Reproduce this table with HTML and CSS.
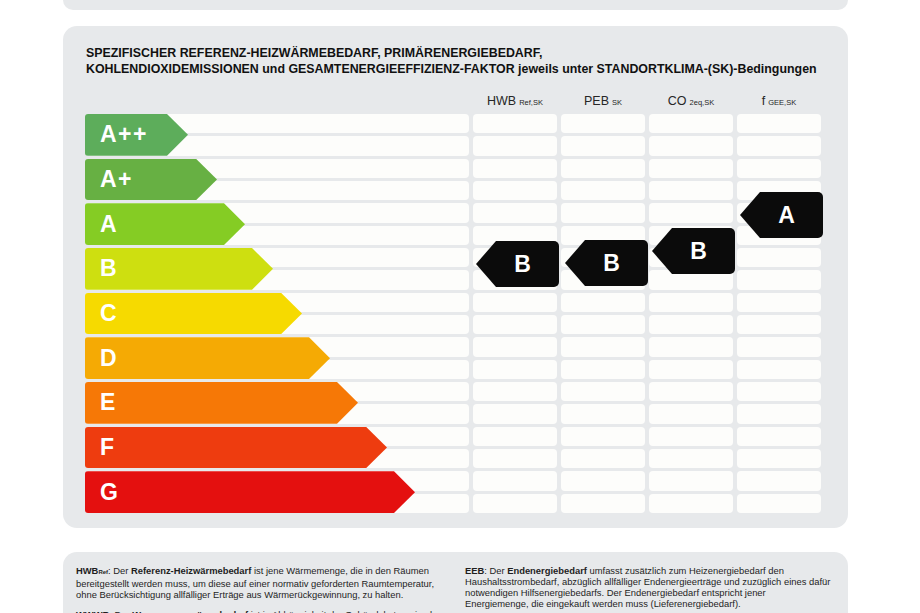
FILE: index.html
```html
<!DOCTYPE html>
<html lang="de">
<head>
<meta charset="utf-8">
<title>Energieausweis – Skala</title>
<link rel="stylesheet" href="styles.css">
</head>
<body>
<div class="page">
  <div class="card card-top"></div>

  <section class="card card-main">
    <h1 class="title">SPEZIFISCHER REFERENZ-HEIZWÄRMEBEDARF, PRIMÄRENERGIEBEDARF,<br>KOHLENDIOXIDEMISSIONEN und GESAMTENERGIEEFFIZIENZ-FAKTOR jeweils unter STANDORTKLIMA-(SK)-Bedingungen</h1>

    <div class="chart">
      <div class="head"></div>
      <div class="head">HWB<span class="sub">Ref,SK</span></div>
      <div class="head">PEB<span class="sub">SK</span></div>
      <div class="head">CO<span class="sub">2eq,SK</span></div>
      <div class="head">f<span class="sub">GEE,SK</span></div>

      <div class="scale">
        <div class="band"><div class="s s1"></div><div class="s s2"></div><div class="bar r-app">A++</div></div>
        <div class="band"><div class="s s1"></div><div class="s s2"></div><div class="bar r-ap">A+</div></div>
        <div class="band"><div class="s s1"></div><div class="s s2"></div><div class="bar r-a">A</div></div>
        <div class="band"><div class="s s1"></div><div class="s s2"></div><div class="bar r-b">B</div></div>
        <div class="band"><div class="s s1"></div><div class="s s2"></div><div class="bar r-c">C</div></div>
        <div class="band"><div class="s s1"></div><div class="s s2"></div><div class="bar r-d">D</div></div>
        <div class="band"><div class="s s1"></div><div class="s s2"></div><div class="bar r-e">E</div></div>
        <div class="band"><div class="s s1"></div><div class="s s2"></div><div class="bar r-f">F</div></div>
        <div class="band"><div class="s s1"></div><div class="s s2"></div><div class="bar r-g">G</div></div>
      </div>

      <div class="col">
        <div class="s"></div><div class="s"></div><div class="s"></div><div class="s"></div><div class="s"></div><div class="s"></div>
        <div class="s"></div><div class="s"></div><div class="s"></div><div class="s"></div><div class="s"></div><div class="s"></div>
        <div class="s"></div><div class="s"></div><div class="s"></div><div class="s"></div><div class="s"></div><div class="s"></div>
        <div class="mark m-hwb">B</div>
      </div>
      <div class="col">
        <div class="s"></div><div class="s"></div><div class="s"></div><div class="s"></div><div class="s"></div><div class="s"></div>
        <div class="s"></div><div class="s"></div><div class="s"></div><div class="s"></div><div class="s"></div><div class="s"></div>
        <div class="s"></div><div class="s"></div><div class="s"></div><div class="s"></div><div class="s"></div><div class="s"></div>
        <div class="mark m-peb">B</div>
      </div>
      <div class="col">
        <div class="s"></div><div class="s"></div><div class="s"></div><div class="s"></div><div class="s"></div><div class="s"></div>
        <div class="s"></div><div class="s"></div><div class="s"></div><div class="s"></div><div class="s"></div><div class="s"></div>
        <div class="s"></div><div class="s"></div><div class="s"></div><div class="s"></div><div class="s"></div><div class="s"></div>
        <div class="mark m-co">B</div>
      </div>
      <div class="col">
        <div class="s"></div><div class="s"></div><div class="s"></div><div class="s"></div><div class="s"></div><div class="s"></div>
        <div class="s"></div><div class="s"></div><div class="s"></div><div class="s"></div><div class="s"></div><div class="s"></div>
        <div class="s"></div><div class="s"></div><div class="s"></div><div class="s"></div><div class="s"></div><div class="s"></div>
        <div class="mark m-f">A</div>
      </div>
    </div>
  </section>

  <section class="card card-notes">
    <div class="notes-col">
      <p><b>HWB<span class="nsub">Ref</span></b>: Der <b>Referenz-Heizwärmebedarf</b> ist jene Wärmemenge, die in den Räumen<br>bereitgestellt werden muss, um diese auf einer normativ geforderten Raumtemperatur,<br>ohne Berücksichtigung allfälliger Erträge aus Wärmerückgewinnung, zu halten.</p>
      <p><b>WWWB</b>: Der <b>Warmwasserwärmebedarf</b> ist in Abhängigkeit der Gebäudekategorie als</p>
    </div>
    <div class="notes-col">
      <p><b>EEB</b>: Der <b>Endenergiebedarf</b> umfasst zusätzlich zum Heizenergiebedarf den<br>Haushaltsstrombedarf, abzüglich allfälliger Endenergieerträge und zuzüglich eines dafür<br>notwendigen Hilfsenergiebedarfs. Der Endenergiebedarf entspricht jener<br>Energiemenge, die eingekauft werden muss (Lieferenergiebedarf).</p>
    </div>
  </section>
</div>
</body>
</html>
```

FILE: styles.css
```css
html, body {
  margin: 0;
  padding: 0;
  background: #ffffff;
}

body {
  font-family: "Liberation Sans", Arial, sans-serif;
  color: #1c1c1c;
  width: 920px;
  height: 613px;
  overflow: hidden;
}

.page {
  display: flex;
  flex-direction: column;
  gap: 16px;
  margin-left: 63px;
  width: 785px;
}

.card {
  background: #e7e9eb;
  border-radius: 14px;
}

.card-top {
  height: 10px;
  border-radius: 0 0 12px 12px;
}

.card-main {
  padding: 19px 26px 15px 22px;
}

.title {
  margin: 0 0 16px 1px;
  font-size: 12.4px;
  line-height: 16px;
  font-weight: bold;
  color: #111111;
  white-space: nowrap;
}

.chart {
  display: grid;
  grid-template-columns: 384px repeat(4, 84px);
  column-gap: 4px;
}

.head {
  height: 16px;
  margin-bottom: 5px;
  text-align: center;
  font-size: 12.5px;
  line-height: 16px;
  color: #262626;
  white-space: nowrap;
}

.sub {
  font-size: 7.5px;
  margin-left: 3px;
}

.scale,
.col {
  display: grid;
  height: 399px;
  row-gap: 3px;
}

.scale {
  grid-template-rows: repeat(9, 1fr);
}

.col {
  grid-template-rows: repeat(18, 1fr);
  position: relative;
}

.band {
  display: grid;
  grid-template-rows: 1fr 1fr;
  grid-template-columns: 1fr;
  row-gap: 3px;
}

.s {
  background: #fdfdfb;
  border-radius: 4px;
}

.band .s { grid-column: 1; }
.band .s1 { grid-row: 1; }
.band .s2 { grid-row: 2; }

.bar {
  grid-column: 1;
  grid-row: 1 / 3;
  justify-self: start;
  z-index: 1;
  display: flex;
  align-items: center;
  box-sizing: border-box;
  padding-left: 15px;
  color: #ffffff;
  font-weight: bold;
  font-size: 23px;
  letter-spacing: 1.5px;
  border-radius: 3px 0 0 3px;
  clip-path: polygon(0 0, calc(100% - 21px) 0, 100% 50%, calc(100% - 21px) 100%, 0 100%);
}

.r-app { width: 103px; background: #5dad5b; }
.r-ap  { width: 132px; background: #67b043; }
.r-a   { width: 160px; background: #85cc24; }
.r-b   { width: 188px; background: #cedf10; }
.r-c   { width: 217px; background: #f6da00; }
.r-d   { width: 245px; background: #f5aa04; }
.r-e   { width: 273px; background: #f67806; }
.r-f   { width: 302px; background: #ee3c0f; }
.r-g   { width: 330px; background: #e4100f; }

.mark {
  position: absolute;
  z-index: 2;
  width: 83px;
  height: 46px;
  box-sizing: border-box;
  padding-left: 10px;
  display: flex;
  align-items: center;
  justify-content: center;
  background: #0b0b0b;
  color: #ffffff;
  font-weight: bold;
  font-size: 23px;
  border-radius: 0 5px 5px 0;
  clip-path: polygon(20px 0, 100% 0, 100% 100%, 20px 100%, 0 50%);
}

.m-hwb { left: 3px; top: 127px; }
.m-peb { left: 4px; top: 126px; }
.m-co  { left: 3px; top: 114px; }
.m-f   { left: 3px; top: 78px; }

.card-notes {
  margin-top: 8px;
  display: grid;
  grid-template-columns: 375px 1fr;
  column-gap: 14px;
  padding: 13px 14px 20px 13px;
  height: 80px;
}

.notes-col p {
  margin: 0 0 9px;
  font-size: 9.4px;
  line-height: 11px;
  color: #1e1e1e;
  white-space: nowrap;
}

.nsub {
  font-size: 6px;
}
```
